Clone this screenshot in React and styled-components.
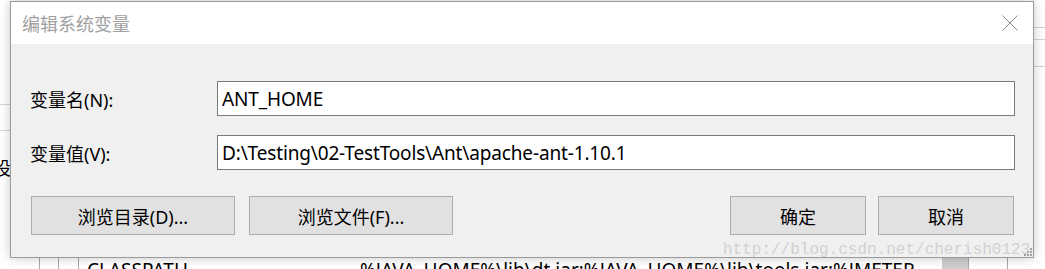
import React from "react";
import styled, { createGlobalStyle } from "styled-components";

const GlobalStyle = createGlobalStyle`
  html, body { margin: 0; padding: 0; background: #fff; }
  body {
    width: 1045px;
    height: 269px;
    overflow: hidden;
    font-family: "Noto Sans", "Noto Sans CJK SC", sans-serif;
  }
`;

const Screen = styled.div`
  position: relative;
  width: 1045px;
  height: 269px;
  overflow: hidden;
  background: #fff;
`;

/* ---------- underlying window (mostly covered) ---------- */
const BackWindow = styled.div`
  display: flex;
  flex-direction: column;
  width: 1045px;
  height: 269px;
`;

const BackTop = styled.div`
  flex: 1;
  display: flex;
  justify-content: space-between;
`;

const LeftEdge = styled.div`
  width: 10px;
  display: flex;
  flex-direction: column;
  padding-top: 104px;
  overflow: hidden;
`;

const RightEdge = styled.div`
  width: 11px;
  display: flex;
  flex-direction: column;
  padding-top: 27px;
`;

const Rule = styled.div`
  height: 1px;
  background: #d5d5d5;
  margin-bottom: ${(p) => p.$after || 0}px;
`;

const EdgeGlyph = styled.div`
  margin-left: -7px;
  font-family: "Noto Sans CJK SC", sans-serif;
  font-size: 18px;
  line-height: 18px;
  color: #000;
`;

const BackRow = styled.div`
  height: 11px;
  display: flex;
  overflow: hidden;
`;

const Cell = styled.div`
  width: ${(p) => p.$w}px;
  flex: ${(p) => (p.$grow ? 1 : "none")};
  border-right: ${(p) => (p.$line ? "1px solid #a9a9a9" : "none")};
  background: ${(p) => p.$bg || "transparent"};
  padding-left: ${(p) => p.$pl || 0}px;
  padding-top: 3px;
  box-sizing: border-box;
  font-size: 19px;
  line-height: 19px;
  white-space: nowrap;
  overflow: hidden;
  color: #000;
`;

/* ---------- dialog ---------- */
const Dialog = styled.div`
  position: absolute;
  left: 10px;
  top: 1px;
  width: 1024px;
  height: 257px;
  box-sizing: border-box;
  border: 1px solid #9b9b9b;
  background: #f0f0f0;
  box-shadow: 0 0 10px rgba(0, 0, 0, 0.22);
  display: flex;
  flex-direction: column;
`;

const TitleBar = styled.div`
  height: 42px;
  flex: none;
  background: #fff;
  display: flex;
  align-items: center;
  justify-content: space-between;
`;

const Title = styled.div`
  padding-left: 11px;
  font-family: "Noto Sans CJK SC", sans-serif;
  font-size: 18px;
  line-height: 1;
  color: #a0a0a0;
`;

const CloseButton = styled.div`
  width: 47px;
  height: 42px;
  display: flex;
  align-items: center;
  justify-content: center;
`;

const Body = styled.div`
  flex: 1;
  padding: 37px 18px 0 20px;
  display: flex;
  flex-direction: column;
`;

const Form = styled.div`
  display: grid;
  grid-template-columns: 186px 1fr;
  row-gap: 19px;
  align-items: center;
`;

const Label = styled.label`
  font-size: 18px;
  line-height: 1;
  color: #000;
  margin-left: -1px;
  padding-top: 2px;
`;

const TextField = styled.input`
  height: 35px;
  box-sizing: border-box;
  border: 1px solid #7a7a7a;
  background: #fff;
  padding: 0 4px;
  margin: 0;
  font-family: "Noto Sans", sans-serif;
  font-size: 19px;
  letter-spacing: -0.15px;
  color: #000;
  outline: none;
  width: 100%;
`;

const ButtonBar = styled.div`
  margin-top: 26px;
  margin-right: 1px;
  display: flex;
  justify-content: space-between;
`;

const ButtonGroup = styled.div`
  display: flex;
  gap: ${(p) => p.$gap}px;
`;

const Button = styled.button`
  width: ${(p) => p.$w}px;
  height: 39px;
  box-sizing: border-box;
  border: 1px solid #adadad;
  background: #e1e1e1;
  font-family: "Noto Sans", "Noto Sans CJK SC", sans-serif;
  font-size: 18px;
  color: #000;
  padding: 0;
  margin: 0;
`;

const Grip = styled.svg`
  position: absolute;
  right: 1px;
  bottom: 1px;
`;

const Watermark = styled.div`
  position: absolute;
  left: 723px;
  top: 243px;
  font-family: "Liberation Mono", monospace;
  font-size: 16px;
  line-height: 15px;
  color: rgba(195, 195, 195, 0.7);
  white-space: nowrap;
  pointer-events: none;
`;

export default function App() {
  return (
    <>
      <GlobalStyle />
      <Screen>
        <BackWindow>
          <BackTop>
            <LeftEdge>
              <Rule $after={25} />
              <Rule $after={27} />
              <EdgeGlyph>设</EdgeGlyph>
            </LeftEdge>
            <RightEdge>
              <Rule $after={11} />
              <Rule $after={26} />
              <Rule />
            </RightEdge>
          </BackTop>
          <BackRow>
            <Cell $w={40} $line />
            <Cell $w={19} $line />
            <Cell $w={20} $line />
            <Cell $w={281} $pl={8}>CLASSPATH</Cell>
            <Cell $w={582}>%JAVA_HOME%\lib\dt.jar;%JAVA_HOME%\lib\tools.jar;%JMETER</Cell>
            <Cell $w={27} $bg="#cdcdcd" $line />
            <Cell $w={39} $line />
            <Cell $grow />
          </BackRow>
        </BackWindow>

        <Dialog>
          <TitleBar>
            <Title>编辑系统变量</Title>
            <CloseButton>
              <svg width="16" height="16" viewBox="0 0 16 16">
                <path d="M0.5 0.5 L15.5 15.5 M15.5 0.5 L0.5 15.5" stroke="#8a8a8a" strokeWidth="1" fill="none" />
              </svg>
            </CloseButton>
          </TitleBar>
          <Body>
            <Form>
              <Label>变量名(N):</Label>
              <TextField readOnly value="ANT_HOME" />
              <Label>变量值(V):</Label>
              <TextField readOnly value="D:\Testing\02-TestTools\Ant\apache-ant-1.10.1" />
            </Form>
            <ButtonBar>
              <ButtonGroup $gap={14}>
                <Button $w={204}>浏览目录(D)...</Button>
                <Button $w={204}>浏览文件(F)...</Button>
              </ButtonGroup>
              <ButtonGroup $gap={12}>
                <Button $w={136}>确定</Button>
                <Button $w={136}>取消</Button>
              </ButtonGroup>
            </ButtonBar>
          </Body>
          <Grip width="8" height="8" viewBox="0 0 8 8">
            <g fill="#a0a0a0">
              <rect x="6" y="0" width="2" height="2" />
              <rect x="3" y="3" width="2" height="2" />
              <rect x="6" y="3" width="2" height="2" />
              <rect x="0" y="6" width="2" height="2" />
              <rect x="3" y="6" width="2" height="2" />
              <rect x="6" y="6" width="2" height="2" />
            </g>
          </Grip>
        </Dialog>

        <Watermark>http://blog.csdn.net/cherish0123</Watermark>
      </Screen>
    </>
  );
}
